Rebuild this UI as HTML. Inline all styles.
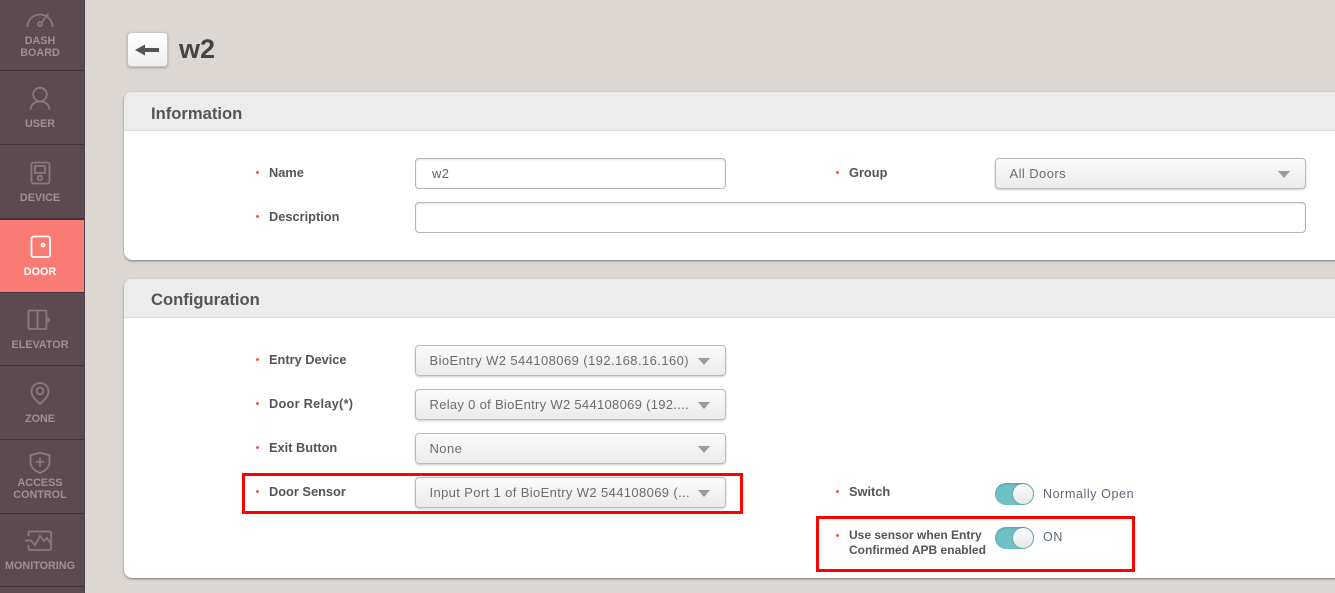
<!DOCTYPE html>
<html><head><meta charset="utf-8"><style>
*{box-sizing:border-box}
html,body{margin:0;padding:0}
body{width:1335px;height:593px;overflow:hidden;background:#dcd7d3;font-family:"Liberation Sans",sans-serif;position:relative}
.abs,.nav,.panel,.lb,.dot,.inp,.sel,.tg,.tv,.rb{position:absolute}
#side{position:absolute;left:0;top:0;width:85px;height:593px;background:#5b4b50;box-shadow:inset -1px 0 0 #544549}
.nav{left:0;width:84px;border-bottom:1px solid #3f3437;color:#9a9096;font-size:10.8px;font-weight:bold;text-align:center;line-height:12px}
.nav span{position:absolute;left:0;width:80px}
.nav svg{position:absolute;left:22px;fill:none;stroke:#857a7f;stroke-width:1.8}
.on{background:#f97b73;color:#fff;border-bottom:1px solid #3f3437;border-top:1px solid #3f3437}
.on svg{stroke:#fff}
.panel{left:124px;width:1240px;background:#fff;border-radius:8px;box-shadow:0 1px 2px rgba(0,0,0,.45);overflow:hidden}
.ph{height:39px;background:#ececec;border-bottom:1px solid #dcdcdc;padding-left:27px;font-size:16.6px;font-weight:bold;color:#555;line-height:44px}
.lb{font-size:12.8px;font-weight:bold;color:#555;line-height:15px}
.dot{width:3px;height:3px;border-radius:50%;background:#f4574a}
.inp{background:#fff;border:1px solid #b5b5b5;border-radius:4px;height:31px;box-shadow:inset 0 1px 2px rgba(0,0,0,.12);font-size:13px;color:#666;padding-left:16px;line-height:30px;letter-spacing:.35px}
.sel{background:linear-gradient(#fbfbfb,#ebebeb);border:1px solid #bbb;border-radius:4px;height:31px;box-shadow:0 1px 2px rgba(0,0,0,.2);font-size:13px;color:#6d6d6d;padding-left:13.500px;line-height:30px;letter-spacing:.42px;white-space:nowrap}
.sel i{position:absolute;right:15px;top:12px;width:0;height:0;border-left:6px solid transparent;border-right:6px solid transparent;border-top:7px solid #999}
.tg{width:39px;height:22px;border-radius:11px;background:#6fc1c6;box-shadow:inset 0 1px 2px rgba(0,0,0,.2)}
.tg b{position:absolute;right:1px;top:1px;width:20px;height:20px;border-radius:50%;background:linear-gradient(#fbfbfb,#e8e8e8);box-shadow:0 0 2px rgba(0,0,0,.3)}
.tv{font-size:12.5px;color:#5f6a75;letter-spacing:.6px;line-height:15px}
.rb{border:3px solid #f00}
</style></head><body>
<div id="side">
<div class="nav" style="top:0;height:71px"><svg style="top:12px" width="40" height="18" viewBox="0 0 40 18"><path d="M5.500 15A12.500 12.500 0 0 1 30.500 15M19.500 10.500L26.500 1.500"/><circle cx="18" cy="12" r="2"/></svg><span style="top:35px">DASH<br>BOARD</span></div>
<div class="nav" style="top:71px;height:74px"><svg style="top:15px" width="40" height="26" viewBox="0 0 40 26"><circle cx="18" cy="8.500" r="6.800"/><path d="M8.500 24C8.500 19 12 15.500 18 15.500S27.500 19 27.500 24"/></svg><span style="top:47px">USER</span></div>
<div class="nav" style="top:145px;height:74px"><svg style="top:15px" width="40" height="30" viewBox="0 0 40 30"><rect x="9.500" y="2.500" width="18" height="21" rx="2"/><rect x="13" y="6" width="10" height="7"/><circle cx="18" cy="18" r="2.200"/></svg><span style="top:47px">DEVICE</span></div>
<div class="nav on" style="top:219px;height:74px"><svg style="top:15px" width="40" height="30" viewBox="0 0 40 30"><rect x="9.500" y="1.500" width="18.500" height="20.500" rx="2"/><circle cx="21" cy="10" r="1.500"/></svg><span style="top:46px">DOOR</span></div>
<div class="nav" style="top:293px;height:73px"><svg style="top:14px" width="40" height="30" viewBox="0 0 40 30"><rect x="6.500" y="3.500" width="18" height="18.500" rx="1"/><path d="M15.500 3.500V22M25 12H27V14H25"/></svg><span style="top:46px">ELEVATOR</span></div>
<div class="nav" style="top:366px;height:74px"><svg style="top:15px" width="40" height="30" viewBox="0 0 40 30"><path d="M18 23C13 18.500 9.500 15 9.500 10.500A8.500 8.500 0 0 1 26.500 10.500C26.500 15 23 18.500 18 23Z"/><circle cx="18" cy="10" r="3.400"/></svg><span style="top:47px">ZONE</span></div>
<div class="nav" style="top:440px;height:74px"><svg style="top:9px" width="40" height="26" viewBox="0 0 40 26"><path d="M18 3.500C21.500 5 24.500 5.500 27.500 6V13C27.500 18 24 21.500 18 24C12 21.500 8.500 18 8.500 13V6C11.500 5.500 14.500 5 18 3.500Z" stroke-linejoin="round"/><path d="M13.500 13H22.500M18 8.500V17.500"/></svg><span style="top:37px">ACCESS<br>CONTROL</span></div>
<div class="nav" style="top:514px;height:73px"><svg style="top:13px" width="40" height="26" viewBox="0 0 40 26"><path d="M6.500 9V6C6.500 5 7 4.500 8 4.500H27.500C28.500 4.500 29 5 29 6V21.500C29 22.500 28.500 23 27.500 23H8C7 23 6.500 22.500 6.500 21.500V18M3 13.500H9L13 18L18 9L22 14L25 11L29 17"/></svg><span style="top:46px">MONITORING</span></div>
</div>

<div class="abs" style="left:127px;top:32px;width:41px;height:35px;background:linear-gradient(#fff,#efefef);border:1px solid #c4c4c4;border-radius:4px;box-shadow:0 1px 2px rgba(0,0,0,.25)"><svg style="position:absolute;left:7px;top:9px" width="26" height="16" viewBox="0 0 26 16"><path d="M0 8L10 2.500V6H24V10H10V13.500Z" fill="#555"/></svg></div>
<div class="abs" style="left:179px;top:33px;font-size:27px;font-weight:bold;color:#444;line-height:33px">w2</div>

<div class="panel" style="top:92px;height:168px"><div class="ph">Information</div></div>
<div class="panel" style="top:279px;height:299px"><div class="ph" style="line-height:42px">Configuration</div></div>

<div class="dot" style="left:256px;top:171px"></div><div class="lb" style="left:269px;top:165px">Name</div>
<div class="inp" style="left:415px;top:158px;width:311px">w2</div>
<div class="dot" style="left:836px;top:171px"></div><div class="lb" style="left:849px;top:165px">Group</div>
<div class="sel" style="left:995px;top:158px;width:311px">All Doors<i></i></div>
<div class="dot" style="left:256px;top:215px"></div><div class="lb" style="left:269px;top:209px">Description</div>
<div class="inp" style="left:415px;top:202px;width:891px"></div>

<div class="dot" style="left:256px;top:358px"></div><div class="lb" style="left:269px;top:352px">Entry Device</div>
<div class="sel" style="left:415px;top:345px;width:311px">BioEntry W2 544108069 (192.168.16.160)<i></i></div>
<div class="dot" style="left:256px;top:402px"></div><div class="lb" style="left:269px;top:396px;letter-spacing:.25px">Door Relay(*)</div>
<div class="sel" style="left:415px;top:389px;width:311px;letter-spacing:.3px">Relay 0 of BioEntry W2 544108069 (192....<i></i></div>
<div class="dot" style="left:256px;top:446px"></div><div class="lb" style="left:269px;top:440px">Exit Button</div>
<div class="sel" style="left:415px;top:433px;width:311px">None<i></i></div>
<div class="dot" style="left:256px;top:490px"></div><div class="lb" style="left:269px;top:484px">Door Sensor</div>
<div class="sel" style="left:415px;top:477px;width:311px;letter-spacing:.37px">Input Port 1 of BioEntry W2 544108069 (...<i></i></div>

<div class="dot" style="left:836px;top:490px"></div><div class="lb" style="left:849px;top:484px">Switch</div>
<div class="tg" style="left:995px;top:483px"><b></b></div><div class="tv" style="left:1043px;top:487px">Normally Open</div>
<div class="dot" style="left:836px;top:534px"></div><div class="lb" style="left:849px;top:528px;font-size:12px;line-height:15px;white-space:nowrap">Use sensor when Entry<br>Confirmed APB enabled</div>
<div class="tg" style="left:995px;top:527px"><b></b></div><div class="tv" style="left:1043px;top:530px">ON</div>

<div class="rb" style="left:242px;top:473px;width:501px;height:41px"></div>
<div class="rb" style="left:816px;top:516px;width:319px;height:56px"></div>
</body></html>
